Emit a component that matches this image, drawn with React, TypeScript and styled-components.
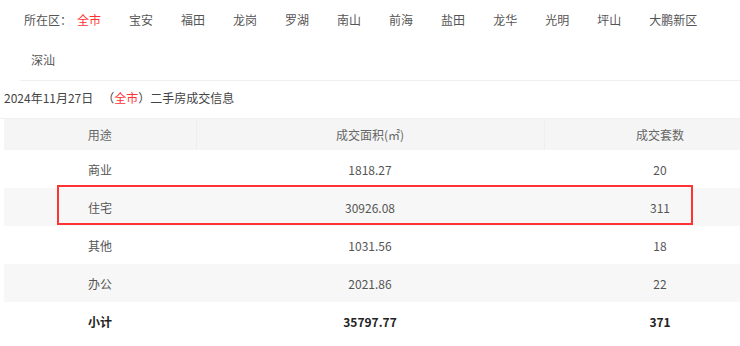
import styled, { createGlobalStyle } from "styled-components"

const districts = ["全市", "宝安", "福田", "龙岗", "罗湖", "南山", "前海", "盐田", "龙华", "光明", "坪山", "大鹏新区", "深汕"]

const rows = [
  { use: "商业", area: "1818.27", count: "20" },
  { use: "住宅", area: "30926.08", count: "311" },
  { use: "其他", area: "1031.56", count: "18" },
  { use: "办公", area: "2021.86", count: "22" },
]

function App() {
  return (
    <Page>
      <GlobalStyle />
      <Nav>
        <NavLabel>所在区：</NavLabel>
        {districts.map((d, i) => (
          <NavItem key={d} $active={i === 0}>{d}</NavItem>
        ))}
      </Nav>
      <Divider />
      <Title>
        2024年11月27日
        <Paren>（<Red>全市</Red>）</Paren>二手房成交信息
      </Title>
      <TableWrap>
        <Table>
          <colgroup>
            <col style={{ width: 192 }} />
            <col style={{ width: 348 }} />
            <col style={{ width: 232 }} />
          </colgroup>
          <thead>
            <tr>
              <Th>用途</Th>
              <Th>成交面积(㎡)</Th>
              <Th>成交套数</Th>
            </tr>
          </thead>
          <tbody>
            {rows.map((r, i) => (
              <Row key={r.use} $striped={i % 2 === 1}>
                <Td>{r.use}</Td>
                <Td>{r.area}</Td>
                <Td>{r.count}</Td>
              </Row>
            ))}
            <Row $striped={false}>
              <Td $bold>小计</Td>
              <Td $bold>35797.77</Td>
              <Td $bold>371</Td>
            </Row>
          </tbody>
        </Table>
        <Highlight />
      </TableWrap>
    </Page>
  )
}

const GlobalStyle = createGlobalStyle`
  body {
    margin: 0;
    background: #fff;
    overflow: hidden;
    font-family: "Noto Sans CJK SC", "Noto Sans", sans-serif;
  }
`

const Page = styled.div`
  width: 740px;
  height: 346px;
  overflow: hidden;
  color: #333;
`

const Nav = styled.div`
  display: flex;
  flex-wrap: wrap;
  padding-left: 24px;
  font-size: 12px;
  line-height: 40px;
  height: 80px;
`

const NavLabel = styled.span`
  width: 46px;
  white-space: nowrap;
  color: #555;
`

const NavItem = styled.span<{ $active: boolean }>`
  padding: 0 21px 0 7px;
  white-space: nowrap;
  color: ${p => (p.$active ? "#f33" : "#555")};
`

const Divider = styled.div`
  margin-left: 20px;
  height: 1px;
  background: #f0f0f0;
`

const Title = styled.div`
  padding-left: 4px;
  height: 33px;
  line-height: 33px;
  padding-bottom: 4px;
  font-size: 12px;
  color: #444;
  border-bottom: 1px solid #f0f0f0;
`

const Paren = styled.span`
  margin-left: 9px;
`

const Red = styled.span`
  color: #f33;
`

const TableWrap = styled.div`
  position: relative;
  margin-left: 4px;
`

const Table = styled.table`
  width: 772px;
  border-collapse: collapse;
  table-layout: fixed;
  font-size: 12px;
`

const Th = styled.th`
  height: 31px;
  padding: 0;
  font-weight: normal;
  color: #666;
  background: #f5f5f5;
  border-right: 1px solid #eeeeee;
  text-align: center;
`

const Row = styled.tr<{ $striped: boolean }>`
  background: ${p => (p.$striped ? "#f7f7f7" : "#fff")};
`

const Td = styled.td<{ $bold?: boolean }>`
  height: 38px;
  padding: 0;
  text-align: center;
  color: ${p => (p.$bold ? "#222" : "#555")};
  font-weight: ${p => (p.$bold ? "bold" : "normal")};
`

const Highlight = styled.div`
  position: absolute;
  top: 66px;
  left: 53px;
  width: 636px;
  height: 40px;
  box-sizing: border-box;
  border: 2px solid #f33;
  pointer-events: none;
`

export default App
